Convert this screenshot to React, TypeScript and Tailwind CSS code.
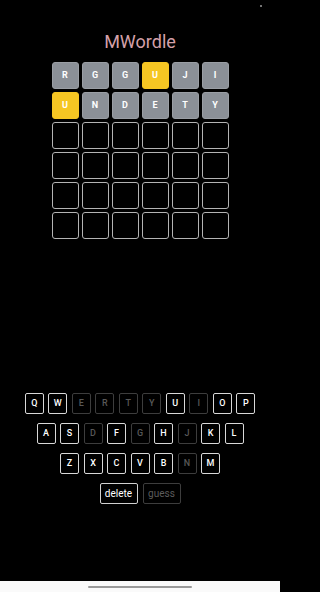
import React from 'react';

type Tile = { letter: string; state: 'gray' | 'yellow' | 'empty' };

const guesses: Tile[][] = [
  [
    { letter: 'R', state: 'gray' },
    { letter: 'G', state: 'gray' },
    { letter: 'G', state: 'gray' },
    { letter: 'U', state: 'yellow' },
    { letter: 'J', state: 'gray' },
    { letter: 'I', state: 'gray' },
  ],
  [
    { letter: 'U', state: 'yellow' },
    { letter: 'N', state: 'gray' },
    { letter: 'D', state: 'gray' },
    { letter: 'E', state: 'gray' },
    { letter: 'T', state: 'gray' },
    { letter: 'Y', state: 'gray' },
  ],
];

const emptyRow: Tile[] = Array.from({ length: 6 }, () => ({ letter: '', state: 'empty' as const }));
const board: Tile[][] = [...guesses, emptyRow, emptyRow, emptyRow, emptyRow];

const keyRows = ['QWERTYUIOP', 'ASDFGHJKL', 'ZXCVBNM'];
const usedUp = new Set(['E', 'R', 'T', 'Y', 'I', 'D', 'G', 'J', 'N']);

const tileClass = (state: Tile['state']) => {
  switch (state) {
    case 'gray':
      return 'bg-[#8b9097] border border-[#9a9ea4]';
    case 'yellow':
      return 'bg-[#f6c623] border border-[#f6c623]';
    default:
      return 'bg-black border border-[#b4b4b4]';
  }
};

function Key({ label }: { label: string }) {
  const dim = usedUp.has(label);
  return (
    <div
      className={`w-[19px] h-[21px] flex items-center justify-center rounded-[2px] border text-[9px] font-medium ${
        dim ? 'border-[#3d3d3d] text-[#585858]' : 'border-[#d8d8d8] text-white'
      }`}
    >
      {label}
    </div>
  );
}

export default function App() {
  return (
    <div className="w-full min-h-[592px] bg-black">
      <div
        className="relative w-[280px] h-[592px] bg-black flex flex-col items-center overflow-hidden"
        style={{ fontFamily: 'Roboto, "Noto Sans", sans-serif' }}
      >
        {/* status dot */}
        <div className="absolute left-[260px] top-[5px] w-[2px] h-[2px] rounded-full bg-[#9a9a9a]" />

        {/* title */}
        <h1 className="mt-[30px] h-[24px] leading-[24px] text-[18px] text-[#d4a0a9]">MWordle</h1>

        {/* board */}
        <div className="mt-[8px] flex flex-col gap-[3px]">
          {board.map((row, r) => (
            <div key={r} className="flex gap-[3px]">
              {row.map((tile, c) => (
                <div
                  key={c}
                  className={`w-[27px] h-[27px] rounded-[3px] flex items-center justify-center text-[9px] font-bold text-white ${tileClass(
                    tile.state
                  )}`}
                >
                  {tile.letter}
                </div>
              ))}
            </div>
          ))}
        </div>

        {/* keyboard */}
        <div className="mt-[154px] flex flex-col items-center gap-[9px]">
          {keyRows.map((row) => (
            <div key={row} className="flex gap-[4.5px]">
              {row.split('').map((k) => (
                <Key key={k} label={k} />
              ))}
            </div>
          ))}
          <div className="flex gap-[5px]">
            <div className="w-[38px] h-[21px] flex items-center justify-center rounded-[2px] border border-[#d0d0d0] text-[10px] text-white">
              delete
            </div>
            <div className="w-[38px] h-[21px] flex items-center justify-center rounded-[2px] border border-[#3d3d3d] text-[10px] text-[#5c5c5c]">
              guess
            </div>
          </div>
        </div>

        {/* nav bar */}
        <div className="mt-auto w-full h-[11px] bg-[#fafafa] flex items-center justify-center">
          <div className="w-[104px] h-[2px] rounded-full bg-[#9a9a9a]" />
        </div>
      </div>
    </div>
  );
}
